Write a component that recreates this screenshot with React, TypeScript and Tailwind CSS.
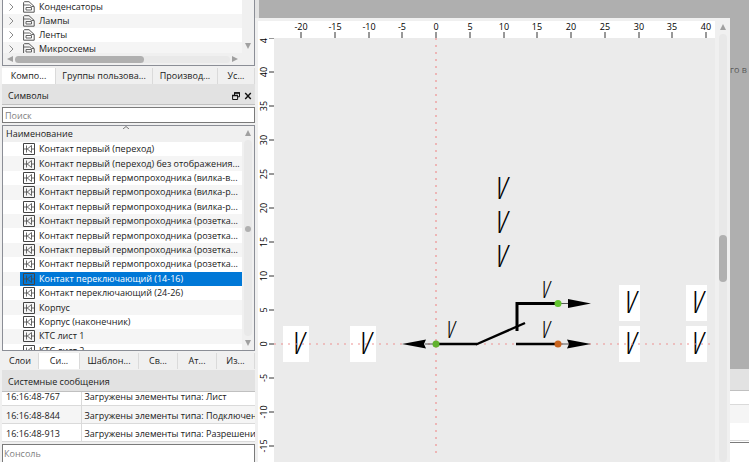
import { type ReactNode } from 'react'

const FOLDERS = ['Конденсаторы', 'Лампы', 'Ленты', 'Микросхемы']

const SYMBOLS = [
  'Контакт первый (переход)',
  'Контакт первый (переход) без отображения...',
  'Контакт первый гермопроходника (вилка-в...',
  'Контакт первый гермопроходника (вилка-р...',
  'Контакт первый гермопроходника (вилка-р...',
  'Контакт первый гермопроходника (розетка...',
  'Контакт первый гермопроходника (розетка...',
  'Контакт первый гермопроходника (розетка...',
  'Контакт первый гермопроходника (розетка...',
  'Контакт переключающий (14-16)',
  'Контакт переключающий (24-26)',
  'Корпус',
  'Корпус (наконечник)',
  'КТС лист 1',
  'КТС лист 2',
]

const SELECTED = 9

const MESSAGES = [
  { time: '16:16:48-767', text: 'Загружены элементы типа: Лист' },
  { time: '16:16:48-844', text: 'Загружены элементы типа: Подключения' },
  { time: '16:16:48-913', text: 'Загружены элементы типа: Разрешения' },
]

const TOP_RULER = [-20, -15, -10, -5, 0, 5, 10, 15, 20, 25, 30, 35, 40]
const SIDE_RULER = [45, 40, 35, 30, 25, 20, 15, 10, 5, 0, -5, -10, -15]

// Canvas coordinates of the symbol's zero point
const ORIGIN_X = 162
const ORIGIN_Y = 306
const RULER_WIDTH = 16

// ---------------------------------------------------------------------------
// Icons
// ---------------------------------------------------------------------------

function FolderIcon() {
  return (
    <svg className="h-3 w-3 shrink-0" viewBox="0 0 12 12" fill="none" stroke="#555" aria-hidden="true">
      <path d="M.6 11.200V1.500L1.500.7H6L11.200 5.500V11.200z" />
      <path d="M.6 4H6.500L8.500 5.500H11M3 6.500H8.500V9H3z" strokeWidth="0.9" />
    </svg>
  )
}

function SymbolIcon() {
  return (
    <svg className="h-3 w-3 shrink-0" viewBox="0 0 12 12" fill="none" stroke="#444" aria-hidden="true">
      <path d="M.5.5h11v11H.5z" />
      <path d="M1 6h3.500M3.500 2.500v7M8.500 2.500v7L4.300 6z M8.500 6h2.500" strokeWidth="0.8" />
    </svg>
  )
}

function ExpandIcon() {
  return (
    <svg className="h-2 w-2 shrink-0" viewBox="0 0 8 8" fill="none" stroke="#8a8a8a" aria-hidden="true">
      <path d="M1.500.5L5 4 1.500 7.500" />
    </svg>
  )
}

function Arrow({ dir }: { readonly dir: 'up' | 'down' | 'left' | 'right' }) {
  const points = {
    up: '0,6 3,0 6,6',
    down: '0,0 6,0 3,6',
    left: '6,0 6,6 0,3',
    right: '0,0 6,3 0,6',
  }[dir]
  return (
    <svg className="h-[6px] w-[6px] shrink-0" viewBox="0 0 6 6" fill="#a0a0a0" aria-hidden="true">
      <polygon points={points} />
    </svg>
  )
}

function RestoreIcon() {
  return (
    <svg className="h-2 w-2" viewBox="0 0 8 8" fill="none" stroke="#111" aria-hidden="true">
      <path d="M2.500 3V.8h5v4H6M.6 3.500h5v4h-5z" />
      <path d="M2 1h6M0 3.500h6" strokeWidth="1.4" />
    </svg>
  )
}

function CloseIcon() {
  return (
    <svg className="h-2 w-2" viewBox="0 0 8 8" fill="none" stroke="#111" strokeWidth="1.4" aria-hidden="true">
      <path d="M1.200 1l5.600 6M6.800 1L1.200 7" />
    </svg>
  )
}

// ---------------------------------------------------------------------------
// Left dock
// ---------------------------------------------------------------------------

function Tab({ children, className, active = false }: {
  readonly children: ReactNode
  readonly className: string
  readonly active?: boolean
}) {
  return (
    <button
      type="button"
      role="tab"
      aria-selected={active}
      className={`h-full shrink-0 border-r border-[#dadada] whitespace-nowrap ${active ? 'bg-white' : 'bg-[#f0f0f0]'} ${className}`}
    >
      {children}
    </button>
  )
}

function ComponentTree() {
  return (
    <section className="h-[66px] shrink-0 overflow-hidden border border-t-0 border-[#8b8e96] bg-white">
      <div className="flex h-[53px]">
        <ul className="min-w-0 flex-1 overflow-hidden">
          {FOLDERS.map((name, i) => (
            <li key={name} className={`flex h-[14px] items-center gap-[7px] pl-[5px] ${i % 2 ? 'bg-[#f5f5f5]' : 'bg-white'}`}>
              <ExpandIcon />
              <span className="flex items-center gap-1">
                <FolderIcon />
                {name}
              </span>
            </li>
          ))}
        </ul>
        <div className="flex w-3 flex-col items-center justify-end bg-[#f0f0f0] pb-1">
          <Arrow dir="down" />
        </div>
      </div>
      <div className="flex h-3 items-center bg-[#f0f0f0] pr-4 pl-1">
        <Arrow dir="left" />
        <div className="mx-[2px] flex-1 rounded-full bg-[#e9e9e9]">
          <div className="h-[7px] w-3/5 rounded-full bg-[#b0b0b0]" />
        </div>
        <Arrow dir="right" />
      </div>
    </section>
  )
}

function SymbolList() {
  return (
    <section className="mt-[2px] flex h-[226px] shrink-0 overflow-hidden border border-[#8b8e96] bg-white">
      <div className="min-w-0 flex-1">
        <div className="relative flex h-4 items-center bg-[#f0f0f0] pl-[3px]">
          Наименование
          <svg className="absolute top-0 left-1/2 h-[3px] w-[6px]" viewBox="0 0 6 3" fill="none" stroke="#777" aria-hidden="true">
            <path d="M0 3l3-2.500L6 3" />
          </svg>
        </div>
        <ul className="flex h-[216px] flex-col">
          {SYMBOLS.map((name, i) => (
            <li key={i} className={`flex flex-1 pl-[17px] ${i % 2 ? 'bg-[#f5f5f5]' : 'bg-white'}`}>
              <span
                className={`flex flex-1 items-center gap-1 pl-[3px] whitespace-nowrap ${i === SELECTED ? 'bg-[#0078d7] text-white' : ''}`}
              >
                <SymbolIcon />
                {name}
              </span>
            </li>
          ))}
        </ul>
      </div>
      <div className="flex w-3 flex-col items-center bg-[#f0f0f0] pt-1 pb-1">
        <Arrow dir="up" />
        <div className="my-1 flex w-2 flex-1 flex-col items-center rounded-full bg-[#e9e9e9] pt-[86px]">
          <div className="h-[6px] w-[6px] rounded-full bg-[#b0b0b0]" />
        </div>
        <Arrow dir="down" />
      </div>
    </section>
  )
}

function Dock() {
  return (
    <aside className="flex w-[255px] shrink-0 flex-col overflow-hidden bg-[#f0f0f0] pl-[2px]">
      <ComponentTree />
      <div role="tablist" className="mt-[2px] flex h-4 shrink-0">
        <Tab active className="w-[54px]">Компо...</Tab>
        <Tab className="w-[97px]">Группы пользова...</Tab>
        <Tab className="w-[65px]">Производ...</Tab>
        <Tab className="w-[37px]">Ус...</Tab>
      </div>
      <div className="flex h-[21px] shrink-0 items-center justify-between border-b border-[#c0c0c0] bg-[#e2e2e2] pt-[3px] pr-[3px] pl-[6px]">
        <h2>Символы</h2>
        <span className="flex gap-1">
          <button type="button" aria-label="Открепить"><RestoreIcon /></button>
          <button type="button" aria-label="Закрыть"><CloseIcon /></button>
        </span>
      </div>
      <input
        aria-label="Поиск"
        placeholder="Поиск"
        className="mt-[2px] h-4 shrink-0 border border-[#7a7a7a] bg-white px-[2px] placeholder:text-[#7f7f7f]"
      />
      <SymbolList />
      <div role="tablist" className="mt-[2px] flex h-4 shrink-0">
        <Tab className="w-[37px]">Слои</Tab>
        <Tab active className="w-[41px]">Си...</Tab>
        <Tab className="w-[59px]">Шаблон...</Tab>
        <Tab className="w-[39px]">Св...</Tab>
        <Tab className="w-[39px]">Ат...</Tab>
        <Tab className="w-[38px]">Из...</Tab>
      </div>
      <h2 className="mt-[1px] flex h-[22px] shrink-0 items-center border-b border-[#c0c0c0] bg-[#e2e2e2] pt-[3px] pl-[6px]">
        Системные сообщения
      </h2>
      <div className="flex h-[50px] shrink-0 flex-col justify-end overflow-hidden">
        <table className="w-full table-fixed border-collapse">
          <tbody>
            {MESSAGES.map((m, i) => (
              <tr key={m.time} className={`h-[18px] ${i === 1 ? 'bg-[#f5f5f5]' : 'bg-white'}`}>
                <td className="w-[79px] border-r border-b border-[#dadada] pt-[2px] pl-1">{m.time}</td>
                <td className="border-b border-[#dadada] pt-[2px] pl-[3px] whitespace-nowrap">{m.text}</td>
              </tr>
            ))}
          </tbody>
        </table>
      </div>
      <input
        aria-label="Консоль"
        placeholder="Консоль"
        className="mt-[2px] min-h-4 flex-1 border border-b-0 border-[#7a7a7a] bg-white px-[1px] placeholder:text-[#7f7f7f]"
      />
    </aside>
  )
}

// ---------------------------------------------------------------------------
// Symbol editor
// ---------------------------------------------------------------------------

function Mark({ x, y, small = false }: {
  readonly x: number
  readonly y: number
  readonly small?: boolean
}) {
  return (
    <text
      x={x - 2}
      y={y}
      fontSize={small ? 23 : 32}
      className="fill-black font-['Open_Sans_Condensed_Light','Open_Sans',sans-serif] font-light italic"
    >
      V
    </text>
  )
}

function Drawing() {
  return (
    <svg className="absolute inset-0 h-full w-full" aria-label="Контакт переключающий">
      <g fill="#fff">
        <rect x="9" y="288" width="26" height="36" />
        <rect x="76" y="288" width="26" height="36" />
        <rect x="345" y="247" width="21" height="36" />
        <rect x="412" y="247" width="21" height="36" />
        <rect x="345" y="288" width="21" height="36" />
        <rect x="412" y="288" width="21" height="36" />
      </g>
      <Mark x={20} y={316} />
      <Mark x={87} y={316} />
      <Mark x={352} y={275} />
      <Mark x={419} y={275} />
      <Mark x={352} y={316} />
      <Mark x={419} y={316} />
      <Mark x={223} y={161} />
      <Mark x={223} y={195} />
      <Mark x={223} y={229} />
      <Mark x={174} y={300} small />
      <Mark x={269} y={260} small />
      <Mark x={269} y={300} small />
      <g stroke="#ee9292" strokeWidth="1.200" strokeDasharray="2 5">
        <path d={`M${ORIGIN_X} 0V416`} />
        <path d={`M0 ${ORIGIN_Y}H438`} />
      </g>
      <g stroke="#000" fill="none">
        <path d="M162 306h41" strokeWidth="2.400" />
        <path d="M202 306.500L251 285" strokeWidth="2.400" />
        <path d="M243 293V265.500H284" strokeWidth="3" />
        <path d="M242 306h42" strokeWidth="2.400" />
        <path d="M151 306h11M284 265.500h11M284 306h11" stroke="#555" />
      </g>
      <path d="M128 306l24-4.500-2 4.500 2 4.500zM317 265.500l-23-4.500v9zM317 306l-24-4.500 2 4.500-2 4.500z" />
      <circle cx="162" cy="306" r="3.500" fill="#62b22f" />
      <circle cx="284" cy="265.500" r="3.500" fill="#62c52f" />
      <circle cx="284" cy="306" r="3.500" fill="#c8641e" />
    </svg>
  )
}

function TopRuler() {
  return (
    <svg className="h-[17px] w-full shrink-0 bg-white" aria-label="Горизонтальная линейка">
      {TOP_RULER.map((v) => {
        const x = Math.round(ORIGIN_X + RULER_WIDTH + v * 6.75)
        return (
          <g key={v}>
            <text x={x} y="9" textAnchor="middle" fontSize="9">{v}</text>
            <path d={`M${x} 11v6`} stroke="#333" />
          </g>
        )
      })}
    </svg>
  )
}

function SideRuler() {
  return (
    <svg className="h-full w-4 shrink-0 bg-white" aria-label="Вертикальная линейка">
      {SIDE_RULER.map((v) => {
        const y = Math.round(ORIGIN_Y - v * 6.8)
        return (
          <g key={v}>
            <text transform={`translate(9 ${y}) rotate(-90)`} textAnchor="middle" fontSize="9">{v}</text>
            <path d={`M11 ${y}h5`} stroke="#333" />
          </g>
        )
      })}
    </svg>
  )
}

function Editor() {
  return (
    <main className="flex min-w-0 flex-1 bg-[#f0f0f0]">
      <div className="flex min-w-0 flex-1 flex-col pt-[3px] pl-[3px]">
        <TopRuler />
        <div className="flex min-h-0 flex-1">
          <SideRuler />
          <div className="relative min-w-0 flex-1 bg-[#ebebeb]">
            <Drawing />
          </div>
        </div>
      </div>
      <div className="flex w-[15px] flex-col items-center pt-[6px]">
        <Arrow dir="up" />
        <div className="mt-1 w-2 flex-1 rounded-full bg-[#e8e8e8] pt-[201px]">
          <div className="h-[47px] w-2 rounded-full bg-[#b0b0b0]" />
        </div>
      </div>
    </main>
  )
}

// Part of the main window that stays visible beside the editor
function Backdrop() {
  return (
    <div className="flex w-[19px] shrink-0 flex-col bg-white">
      <div className="h-[351px] shrink-0 bg-[#afafaf] pt-[46px] text-[#5a5a5a]">го в</div>
      <div className="h-[22px] shrink-0 border-b border-[#c0c0c0] bg-[#e2e2e2]" />
      <div className="h-[14px] shrink-0 border-b border-[#dadada]" />
      <div className="h-[18px] shrink-0 bg-[#f5f5f5]" />
      <div className="h-[18px] shrink-0 border-b border-[#dadada]" />
      <div className="h-[2px] shrink-0 border-b border-[#7a7a7a]" />
    </div>
  )
}

export default function App() {
  return (
    <div className="flex h-screen min-h-[462px] overflow-hidden bg-[#f0f0f0] font-['Open_Sans','Noto_Sans',sans-serif] text-[9px] leading-[12px] text-[#1a1a1a]">
      <Dock />
      <div className="flex min-w-0 flex-1 flex-col">
        <div className="flex h-[18px] shrink-0 bg-[#e2e2e2] pl-1">
          <div className="flex-1 bg-[#afafaf]" />
        </div>
        <div className="flex min-h-0 flex-1">
          <Editor />
          <Backdrop />
        </div>
      </div>
    </div>
  )
}
